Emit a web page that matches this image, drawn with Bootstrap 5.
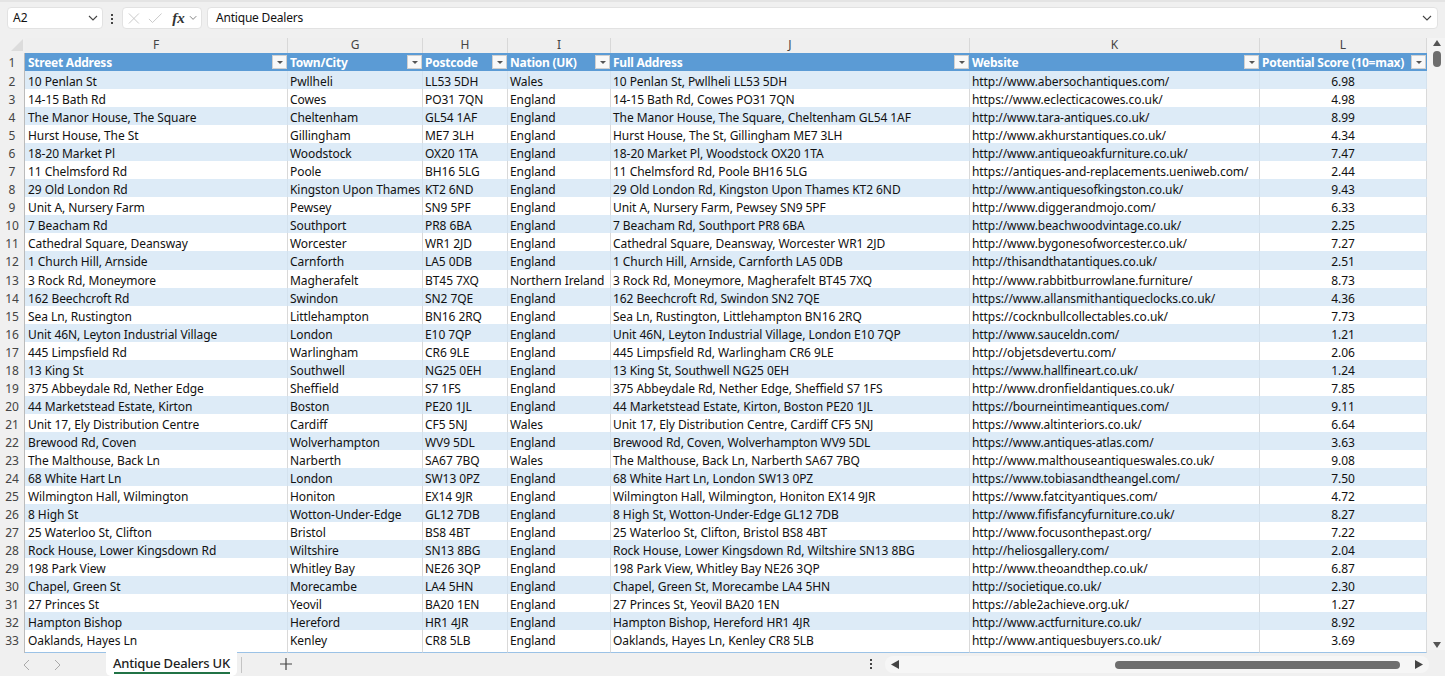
<!DOCTYPE html>
<html lang="en"><head><meta charset="utf-8"><title>Antique Dealers</title>
<link href="https://cdn.jsdelivr.net/npm/bootstrap@5.3.0/dist/css/bootstrap.min.css" rel="stylesheet">
<style>
html,body{height:100%;overflow:hidden}
body{background:#f0f0f0;font-family:"Noto Sans","Open Sans",sans-serif;font-size:12px;color:#111}
.xl-app{width:1445px;height:676px}
.xl-fbar{height:38px;padding:5px 7px 0 7px;border-top:2px solid #e4e4e4}
.xl-box{background:#fff;border:1px solid #e2e2e2;border-radius:4px;height:22px}
.xl-name{width:96px;padding:0 4px 0 5px}
.xl-fx{width:80px;padding:0 4px 0 5px}
.xl-fxlabel{font-family:"Liberation Serif",serif;font-size:15px;font-weight:700;color:#333;margin-left:10px}
.xl-formula{flex:1;margin-left:5px;padding:0 5px 0 8px;letter-spacing:-.2px}
.xl-dots{width:3px;gap:2px;margin:0 8px;padding-top:7px}
.xl-dots i{width:2px;height:2px;background:#444;display:block}
.xl-gridwrap{height:612px}
.xl-sheet{width:1427px}
.xl-row{display:grid;grid-template-columns:25px 263px 135px 85px 103px 359px 290px 167px;height:18.06px;line-height:22px;white-space:nowrap;letter-spacing:-.07px}
.xl-row>div{padding-left:2px}
.xl-row>div:nth-child(2){padding-left:3px}
.xl-colhead{height:15px;line-height:13px;color:#444;background:#efefef;letter-spacing:0}
.xl-colhead>div{text-align:center;border-right:1px solid #d8d8d8;padding-left:0!important}
.xl-corner{background:#f0f0f0;border-right:0!important;position:relative}
.xl-corner::after{content:"";position:absolute;right:2px;bottom:2px;border-style:solid;border-width:0 0 12px 12px;border-color:transparent transparent #dcdcdc transparent}
.xl-rh{background:#f0f0f0;color:#444;text-align:center;padding-left:0!important;border-right:1px solid #bbb;letter-spacing:0}
.xl-head{height:18px;color:#fff;font-weight:700;background:#5b9bd5;letter-spacing:-.25px;line-height:20px}
.xl-head>div{position:relative}
.xl-head .xl-rh{font-weight:400;color:#444;letter-spacing:0;line-height:20px}
.xl-body>div:not(.xl-rh){border-right:1px solid #d9d9d9;border-bottom:1px solid #9bc2e6}
.xl-band>div:not(.xl-rh){background:#ddebf7;border-right-color:#d4e2ee}
.xl-plain>div:not(.xl-rh){background:#fff}
.xl-num{text-align:center;padding-left:0!important}
.xl-filter{position:absolute;right:1px;top:2px;width:15px;height:14px;background:#f8f8f8;border:1px solid #d0d0d0}
.xl-filter::after{content:"";position:absolute;left:4px;top:5px;border:3px solid transparent;border-top:3px solid #555;border-bottom:0}
.xl-vscroll{width:18px;background:#f4f4f4;padding:2px 0 0 2px;height:612px}
.xl-thumb{width:8px;height:16px;background:#6e6e6e;border-radius:4px;margin-top:5px}
.xl-vdown{margin-top:auto;margin-bottom:2px}
.xl-tabs{height:26px;position:relative}
.xl-nav1{margin-left:23px;margin-top:9px}
.xl-nav2{margin-left:22px;margin-top:9px}
.xl-tab{background:#fff;height:26px;width:131px;margin-left:45px;border-radius:0 0 5px 5px;font-size:13px;line-height:26px;text-align:center;font-weight:500;color:#222;position:relative;letter-spacing:-.2px}
.xl-tab::after{content:"";position:absolute;left:8px;right:7px;bottom:2px;height:2px;background:#217346}
.xl-sep{width:1px;height:16px;background:#c4c4c4;margin:7px 0 0 4px}
.xl-plus{margin:8px 0 0 38px}
.xl-vdots{gap:2px;margin:9px 0 0 578px}
.xl-vdots i{width:2px;height:2px;background:#444;display:block}
.xl-hbar{position:absolute;left:885px;top:6px;width:544px;height:17px;background:#f6f6f6;border-radius:8px;padding:0 6px}
.xl-hthumb{height:8px;width:285px;background:#6e6e6e;border-radius:4px;margin-left:auto;margin-right:15px}
</style></head><body>
<div class="xl-app d-flex flex-column">
<div class="xl-fbar d-flex align-items-start">
  <div class="xl-box xl-name d-flex align-items-center justify-content-between"><span>A2</span><svg width="10" height="6" viewBox="0 0 10 6"><path d="M1 1l4 4 4-4" fill="none" stroke="#444" stroke-width="1.1"/></svg></div>
  <div class="xl-dots d-flex flex-column"><i></i><i></i><i></i></div>
  <div class="xl-box xl-fx d-flex align-items-center">
    <svg width="13" height="13" viewBox="0 0 13 13"><path d="M1 1l11 11M12 1L1 12" stroke="#c4c4c4" fill="none"/></svg>
    <svg class="ms-2" width="16" height="12" viewBox="0 0 16 12"><path d="M1 7l4 4L15 1" stroke="#c4c4c4" fill="none"/></svg>
    <i class="xl-fxlabel">fx</i>
    <svg class="ms-1" width="9" height="6" viewBox="0 0 9 6"><path d="M1 1l3.500 3.500L8 1" fill="none" stroke="#777"/></svg>
  </div>
  <div class="xl-box xl-formula d-flex align-items-center justify-content-between"><span>Antique Dealers</span><svg width="10" height="6" viewBox="0 0 10 6"><path d="M1 1l4 4 4-4" fill="none" stroke="#444" stroke-width="1.1"/></svg></div>
</div>
<div class="xl-gridwrap d-flex">
  <div class="xl-sheet" id="sheet">
    <div class="xl-row xl-colhead"><div class="xl-corner"></div><div>F</div><div>G</div><div>H</div><div>I</div><div>J</div><div>K</div><div>L</div></div>
    <div class="xl-row xl-head"><div class="xl-rh">1</div><div>Street Address<span class="xl-filter"></span></div><div>Town/City<span class="xl-filter"></span></div><div>Postcode<span class="xl-filter"></span></div><div>Nation (UK)<span class="xl-filter"></span></div><div>Full Address<span class="xl-filter"></span></div><div>Website<span class="xl-filter"></span></div><div>Potential Score (10=max)<span class="xl-filter"></span></div></div>
  </div>
  <div class="xl-vscroll d-flex flex-column align-items-center">
    <svg width="8" height="6" viewBox="0 0 8 6"><path d="M4 0l4 6H0z" fill="#555"/></svg>
    <div class="xl-thumb"></div>
    <svg class="xl-vdown" width="8" height="6" viewBox="0 0 8 6"><path d="M0 0h8L4 6z" fill="#555"/></svg>
  </div>
</div>
<div class="xl-tabs d-flex align-items-start">
  <svg class="xl-nav1" width="8" height="12" viewBox="0 0 8 12"><path d="M6 1L1 6l5 5" fill="none" stroke="#aaa"/></svg>
  <svg class="xl-nav2" width="8" height="12" viewBox="0 0 8 12"><path d="M2 1l5 5-5 5" fill="none" stroke="#aaa"/></svg>
  <div class="xl-tab">Antique Dealers UK</div>
  <div class="xl-sep"></div>
  <svg class="xl-plus" width="12" height="12" viewBox="0 0 12 12"><path d="M6 0v12M0 6h12" stroke="#444" stroke-width="1.200"/></svg>
  <div class="xl-vdots d-flex flex-column"><i></i><i></i><i></i></div>
  <div class="xl-hbar d-flex align-items-center">
    <svg width="8" height="9" viewBox="0 0 8 9"><path d="M8 0v9L0 4.500z" fill="#444"/></svg>
    <div class="xl-hthumb"></div>
    <svg width="8" height="9" viewBox="0 0 8 9"><path d="M0 0v9l8-4.500z" fill="#444"/></svg>
  </div>
</div>
</div>
<script>
const d=[
["10 Penlan St","Pwllheli","LL53 5DH","Wales","http://www.abersochantiques.com/","6.98"],
["14-15 Bath Rd","Cowes","PO31 7QN","England","https://www.eclecticacowes.co.uk/","4.98"],
["The Manor House, The Square","Cheltenham","GL54 1AF","England","http://www.tara-antiques.co.uk/","8.99"],
["Hurst House, The St","Gillingham","ME7 3LH","England","http://www.akhurstantiques.co.uk/","4.34"],
["18-20 Market Pl","Woodstock","OX20 1TA","England","http://www.antiqueoakfurniture.co.uk/","7.47"],
["11 Chelmsford Rd","Poole","BH16 5LG","England","https://antiques-and-replacements.ueniweb.com/","2.44"],
["29 Old London Rd","Kingston Upon Thames","KT2 6ND","England","http://www.antiquesofkingston.co.uk/","9.43"],
["Unit A, Nursery Farm","Pewsey","SN9 5PF","England","http://www.diggerandmojo.com/","6.33"],
["7 Beacham Rd","Southport","PR8 6BA","England","http://www.beachwoodvintage.co.uk/","2.25"],
["Cathedral Square, Deansway","Worcester","WR1 2JD","England","http://www.bygonesofworcester.co.uk/","7.27"],
["1 Church Hill, Arnside","Carnforth","LA5 0DB","England","http://thisandthatantiques.co.uk/","2.51"],
["3 Rock Rd, Moneymore","Magherafelt","BT45 7XQ","Northern Ireland","http://www.rabbitburrowlane.furniture/","8.73"],
["162 Beechcroft Rd","Swindon","SN2 7QE","England","https://www.allansmithantiqueclocks.co.uk/","4.36"],
["Sea Ln, Rustington","Littlehampton","BN16 2RQ","England","https://cocknbullcollectables.co.uk/","7.73"],
["Unit 46N, Leyton Industrial Village","London","E10 7QP","England","http://www.sauceldn.com/","1.21"],
["445 Limpsfield Rd","Warlingham","CR6 9LE","England","http://objetsdevertu.com/","2.06"],
["13 King St","Southwell","NG25 0EH","England","https://www.hallfineart.co.uk/","1.24"],
["375 Abbeydale Rd, Nether Edge","Sheffield","S7 1FS","England","http://www.dronfieldantiques.co.uk/","7.85"],
["44 Marketstead Estate, Kirton","Boston","PE20 1JL","England","https://bourneintimeantiques.com/","9.11"],
["Unit 17, Ely Distribution Centre","Cardiff","CF5 5NJ","Wales","https://www.altinteriors.co.uk/","6.64"],
["Brewood Rd, Coven","Wolverhampton","WV9 5DL","England","https://www.antiques-atlas.com/","3.63"],
["The Malthouse, Back Ln","Narberth","SA67 7BQ","Wales","http://www.malthouseantiqueswales.co.uk/","9.08"],
["68 White Hart Ln","London","SW13 0PZ","England","https://www.tobiasandtheangel.com/","7.50"],
["Wilmington Hall, Wilmington","Honiton","EX14 9JR","England","https://www.fatcityantiques.com/","4.72"],
["8 High St","Wotton-Under-Edge","GL12 7DB","England","http://www.fifisfancyfurniture.co.uk/","8.27"],
["25 Waterloo St, Clifton","Bristol","BS8 4BT","England","http://www.focusonthepast.org/","7.22"],
["Rock House, Lower Kingsdown Rd","Wiltshire","SN13 8BG","England","http://heliosgallery.com/","2.04"],
["198 Park View","Whitley Bay","NE26 3QP","England","http://www.theoandthep.co.uk/","6.87"],
["Chapel, Green St","Morecambe","LA4 5HN","England","http://societique.co.uk/","2.30"],
["27 Princes St","Yeovil","BA20 1EN","England","https://able2achieve.org.uk/","1.27"],
["Hampton Bishop","Hereford","HR1 4JR","England","http://www.actfurniture.co.uk/","8.92"],
["Oaklands, Hayes Ln","Kenley","CR8 5LB","England","http://www.antiquesbuyers.co.uk/","3.69"]];
const s=document.getElementById('sheet');
d.forEach((r,i)=>{
 const full=r[0]+', '+r[1]+' '+r[2];
 const e=document.createElement('div');
 e.className='xl-row xl-body '+(i%2?'xl-plain':'xl-band');
 [i+2,r[0],r[1],r[2],r[3],full,r[4],r[5]].forEach((t,j)=>{
  const c=document.createElement('div');
  if(j==0)c.className='xl-rh';
  if(j==7)c.className='xl-num';
  c.textContent=t;e.appendChild(c);
 });
 s.appendChild(e);
});
</script>
<script src="https://cdn.jsdelivr.net/npm/bootstrap@5.3.0/dist/js/bootstrap.bundle.min.js"></script>
</body></html>
